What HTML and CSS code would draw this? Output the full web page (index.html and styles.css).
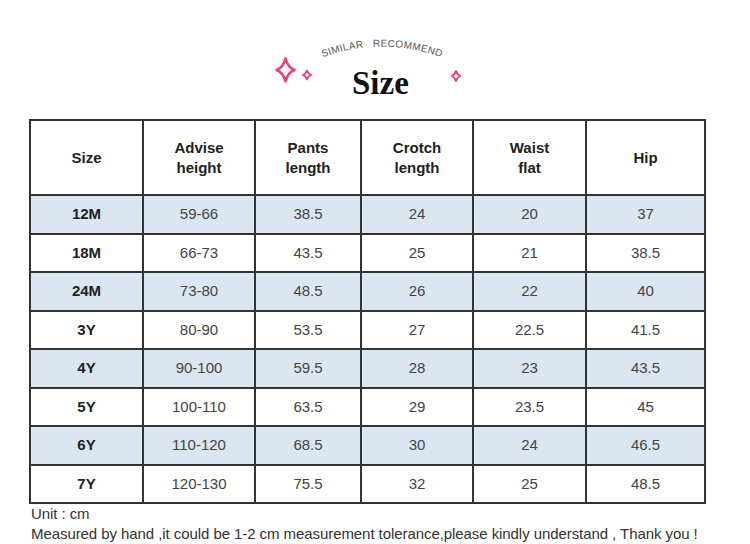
FILE: index.html
```html
<!DOCTYPE html>
<html lang="en">
<head>
<meta charset="utf-8">
<title>Size</title>
<link rel="stylesheet" href="styles.css">
</head>
<body>
<div class="page">
  <header class="hero">
    <div class="hero-inner">
      <svg class="deco" width="210" height="80" viewBox="0 0 210 80">
        <defs>
          <path id="arc" d="M 28 39 A 169 169 0 0 1 196 39"/>
        </defs>
        <text class="arc-text"><textPath href="#arc" startOffset="50%" text-anchor="middle">SIMILAR   RECOMMEND</textPath></text>
        <g class="spark" fill="none" stroke="#e8417a" stroke-linejoin="round">
          <path stroke-width="2.6" d="M15.5 28.5 Q17.8 37.6 24.5 40 Q17.8 42.4 15.5 51.5 Q13.2 42.4 6.5 40 Q13.2 37.6 15.5 28.5 Z"/>
          <path stroke-width="1.8" d="M37 40.6 Q38 44 41.2 45 Q38 46 37 49.4 Q36 46 32.8 45 Q36 44 37 40.6 Z"/>
          <path stroke-width="1.8" d="M186 40.8 Q187 44.8 190.2 46 Q187 47.2 186 51.2 Q185 47.2 181.8 46 Q185 44.8 186 40.8 Z"/>
        </g>
      </svg>
      <h1 class="title">Size</h1>
    </div>
  </header>

  <table class="size-table">
    <colgroup>
      <col class="c1"><col class="c2"><col class="c3"><col class="c4"><col class="c5"><col class="c6">
    </colgroup>
    <thead>
      <tr class="head">
        <th>Size</th>
        <th>Advise<br>height</th>
        <th>Pants<br>length</th>
        <th>Crotch<br>length</th>
        <th>Waist<br>flat</th>
        <th>Hip</th>
      </tr>
    </thead>
    <tbody>
      <tr class="alt"><td class="sz">12M</td><td>59-66</td><td>38.5</td><td>24</td><td>20</td><td>37</td></tr>
      <tr><td class="sz">18M</td><td>66-73</td><td>43.5</td><td>25</td><td>21</td><td>38.5</td></tr>
      <tr class="alt"><td class="sz">24M</td><td>73-80</td><td>48.5</td><td>26</td><td>22</td><td>40</td></tr>
      <tr><td class="sz">3Y</td><td>80-90</td><td>53.5</td><td>27</td><td>22.5</td><td>41.5</td></tr>
      <tr class="alt"><td class="sz">4Y</td><td>90-100</td><td>59.5</td><td>28</td><td>23</td><td>43.5</td></tr>
      <tr><td class="sz">5Y</td><td>100-110</td><td>63.5</td><td>29</td><td>23.5</td><td>45</td></tr>
      <tr class="alt"><td class="sz">6Y</td><td>110-120</td><td>68.5</td><td>30</td><td>24</td><td>46.5</td></tr>
      <tr><td class="sz">7Y</td><td>120-130</td><td>75.5</td><td>32</td><td>25</td><td>48.5</td></tr>
    </tbody>
  </table>

  <div class="notes">
    <p>Unit : cm</p>
    <p>Measured by hand ,it could be 1-2 cm measurement tolerance,please kindly understand , Thank you !</p>
  </div>
</div>
</body>
</html>
```

FILE: styles.css
```css
* { box-sizing: border-box; }
html, body { margin: 0; padding: 0; background: #fff; }
body { font-family: "Liberation Sans", Arial, sans-serif; color: #333; }

.page { width: 750px; height: 544px; overflow: hidden; }

.hero {
  height: 119px;
  padding-top: 30px;
  display: flex;
  justify-content: center;
}
.hero-inner {
  width: 210px;
  height: 80px;
  display: grid;
}
.deco, .title { grid-area: 1 / 1; }
.deco { display: block; }
.arc-text {
  font-family: "Liberation Sans", Arial, sans-serif;
  font-size: 10px;
  letter-spacing: 0.3px;
  fill: #555;
  white-space: pre;
}
.title {
  margin: 37px 0 0 82px;
  align-self: start;
  justify-self: start;
  font-family: "Liberation Serif", "Times New Roman", serif;
  font-weight: 700;
  font-size: 33px;
  line-height: 1;
  color: #111;
}

.size-table {
  margin-left: 29px;
  border-collapse: collapse;
  table-layout: fixed;
  width: 675px;
}
.c1 { width: 113px; }
.c2 { width: 112px; }
.c3 { width: 106px; }
.c4 { width: 112px; }
.c5 { width: 113px; }
.c6 { width: 119px; }

.size-table th,
.size-table td {
  border: 2px solid #333;
  text-align: center;
  vertical-align: middle;
  padding: 0;
  font-size: 15px;
}
.size-table th {
  font-weight: 700;
  line-height: 20px;
  color: #222;
  height: 75px;
}
.size-table td {
  height: 38.5px;
  color: #444;
  line-height: 18px;
}
.size-table td.sz { font-weight: 700; color: #222; }
.size-table tr.alt td { background: #dce6f1; }

.notes {
  padding-left: 31px;
  font-size: 15px;
  line-height: 20px;
  color: #333;
  letter-spacing: -0.07px;
}
.notes p { margin: 0; }
```
